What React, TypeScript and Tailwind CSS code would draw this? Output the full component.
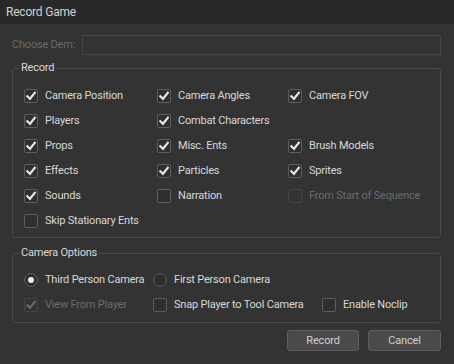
import React from "react";

const font = { fontFamily: 'Roboto, "Noto Sans", sans-serif', letterSpacing: "-0.2px" };

function Check({ checked, disabled }: { checked?: boolean; disabled?: boolean }) {
  return (
    <span
      className={
        "flex h-[14px] w-[14px] shrink-0 items-center justify-center rounded-[2px] border " +
        (disabled ? "border-[#464646] bg-[#333333]" : "border-[#5e5e5e] bg-[#2f2f2f]")
      }
    >
      {checked && (
        <svg width="10" height="10" viewBox="0 0 10 10">
          <path
            d="M1.3 5.2 L4 7.8 L8.8 1.8"
            fill="none"
            stroke={disabled ? "#6a6a6a" : "#e4e4e4"}
            strokeWidth="2.2"
            strokeLinecap="square"
          />
        </svg>
      )}
    </span>
  );
}

function CB({ label, checked, disabled }: { label: string; checked?: boolean; disabled?: boolean }) {
  return (
    <div className="flex h-[25px] items-center gap-[7px] whitespace-nowrap">
      <Check checked={checked} disabled={disabled} />
      <span className={disabled ? "text-[#6c6c6c]" : "text-[#d8d8d8]"}>{label}</span>
    </div>
  );
}

function Radio({ label, checked }: { label: string; checked?: boolean }) {
  return (
    <div className="flex h-[24px] items-center gap-[7px] whitespace-nowrap">
      <span className="flex h-[14px] w-[14px] shrink-0 items-center justify-center rounded-full border border-[#5e5e5e] bg-[#2f2f2f]">
        {checked && <span className="h-[6px] w-[6px] rounded-full bg-[#f0f0f0]" />}
      </span>
      <span className="text-[#d8d8d8]">{label}</span>
    </div>
  );
}

export default function App() {
  return (
    <div className="flex h-[364px] w-[454px] flex-col bg-[#333333] text-[11px] leading-[16px]" style={font}>
      <div className="flex h-[24px] shrink-0 items-center bg-[#292929] pl-[6px] text-[12px] text-[#d2d2d2]">Record Game</div>
      <div className="flex flex-1 flex-col pl-[12px] pr-[13px] pt-[11px]">
        <div className="flex h-[20px] items-center whitespace-nowrap">
          <span className="w-[70px] text-[#6b6b6b]">Choose Dem:</span>
          <div className="h-[20px] flex-1 border border-[#474747] bg-[#333333]" />
        </div>
        <fieldset className="mt-[5px] h-[178px] rounded-[3px] border border-[#4a4a4a] pl-[11px]">
          <legend className="ml-[-5px] px-[2px] text-[#d8d8d8]">Record</legend>
          <div className="mt-[7px] grid grid-cols-[133px_131px_1fr]">
            <CB label="Camera Position" checked />
            <CB label="Camera Angles" checked />
            <CB label="Camera FOV" checked />
            <CB label="Players" checked />
            <CB label="Combat Characters" checked />
            <div />
            <CB label="Props" checked />
            <CB label="Misc. Ents" checked />
            <CB label="Brush Models" checked />
            <CB label="Effects" checked />
            <CB label="Particles" checked />
            <CB label="Sprites" checked />
            <CB label="Sounds" checked />
            <CB label="Narration" />
            <CB label="From Start of Sequence" disabled />
            <CB label="Skip Stationary Ents" />
          </div>
        </fieldset>
        <fieldset className="mt-[7px] h-[78px] rounded-[3px] border border-[#4a4a4a] pl-[11px]">
          <legend className="ml-[-5px] px-[2px] text-[#d8d8d8]">Camera Options</legend>
          <div className="mt-[7px] flex">
            <div className="w-[129px]">
              <Radio label="Third Person Camera" checked />
            </div>
            <Radio label="First Person Camera" />
          </div>
          <div className="flex">
            <div className="w-[129px]">
              <CB label="View From Player" checked disabled />
            </div>
            <div className="w-[169px]">
              <CB label="Snap Player to Tool Camera" />
            </div>
            <CB label="Enable Noclip" />
          </div>
        </fieldset>
        <div className="mt-[7px] flex justify-end gap-[9px]">
          <button className="h-[21px] w-[72px] rounded-[3px] border border-[#5e5e5e] bg-[#4a4a4a] text-[#d0d0d0]">Record</button>
          <button className="h-[21px] w-[73px] rounded-[3px] border border-[#5e5e5e] bg-[#4a4a4a] text-[#d0d0d0]">Cancel</button>
        </div>
      </div>
    </div>
  );
}
